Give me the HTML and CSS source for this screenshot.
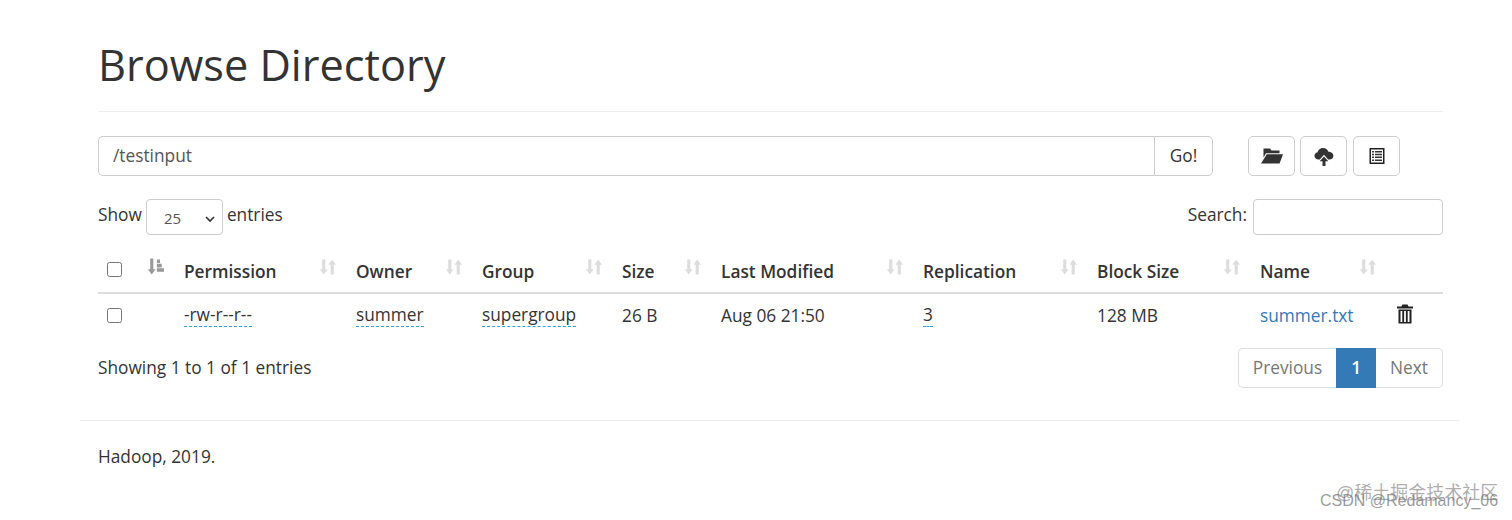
FILE: index.html
```html
<!DOCTYPE html>
<html lang="en">
<head>
    <meta charset="UTF-8">
    <title>Browsing HDFS</title>
    <link rel="stylesheet" href="styles.css">
</head>
<body>
    <div class="container">
        <div class="page-header">
            <h1>Browse Directory</h1>
        </div>

        <!-- Path bar and actions -->
        <div class="path-row">
            <div class="path-group">
                <input class="path-input" type="text" value="/testinput">
                <button class="go-btn">Go!</button>
            </div>
            <div class="actions">
                <button class="icon-btn" title="Create Directory">
                    <svg width="22" height="18" viewBox="0 0 22 18"><path fill="#333" d="M2.500 4V1.500h6.500l1.500 2H18.500v2.700H5L2.500 10.500z"/><path fill="#333" d="M5.800 7.200H22L18.600 16.500H0z"/></svg>
                </button>
                <button class="icon-btn" title="Upload Files">
                    <svg width="20" height="20" viewBox="0 0 20 20"><path fill="#333" d="M4.500 13.500C2 13.500 0.500 11.800 0.500 9.800c0-1.800 1.200-3.200 3-3.500C4.200 3.600 6.500 2 9 2c2.600 0 4.700 1.500 5.400 3.800 2.700 0 5 1.600 5 4 0 2.100-1.600 3.700-4 3.700h-1.300L10 8.800 5.800 13.500z"/><path fill="#333" d="M10 10.500l4.300 4.700h-2.800V20h-3v-4.800H5.700z"/></svg>
                </button>
                <button class="icon-btn icon-btn-last" title="Cut and Paste">
                    <svg width="18" height="18" viewBox="0 0 18 18"><path fill="#222" fill-rule="evenodd" d="M1.500 1h15v16h-15zM3 2.600v12.800h12V2.600z"/><path fill="#333" d="M4 4h2v1.500H4zM7 4h7v1.500H7zM4 6.800h2v1.500H4zM7 6.800h7v1.500H7zM4 9.600h2v1.500H4zM7 9.600h7v1.500H7zM4 12.400h2v1.500H4zM7 12.400h7v1.500H7z"/></svg>
                </button>
            </div>
        </div>

        <!-- Length and search -->
        <div class="filter-row">
            <label class="length-label">Show
                <span class="fake-select">25
                    <svg class="chevron" width="10" height="6" viewBox="0 0 10 6"><path fill="none" stroke="#333" stroke-width="1.700" d="M1 1l4 4 4-4"/></svg>
                </span>
                entries</label>
            <label class="search-label">Search: <input class="search-input" type="text"></label>
        </div>

        <table class="files">
            <colgroup>
                <col class="c-check"><col class="c-perm"><col class="c-owner"><col class="c-group"><col class="c-size">
                <col class="c-date"><col class="c-repl"><col class="c-block"><col class="c-name"><col class="c-del">
            </colgroup>
            <thead>
                <tr>
                    <th><input type="checkbox" class="check"><svg class="sort" viewBox="0 0 18 20"><use href="#arrow-down"/><path fill="#999" d="M10 2h3.500v4h-3.500zM10 7h5.500v4h-5.500zM10 12h8v4h-8z"/></svg></th>
                    <th>Permission<svg class="sort" viewBox="0 0 18 20"><use href="#sort-both"/></svg></th>
                    <th>Owner<svg class="sort" viewBox="0 0 18 20"><use href="#sort-both"/></svg></th>
                    <th>Group<svg class="sort" viewBox="0 0 18 20"><use href="#sort-both"/></svg></th>
                    <th>Size<svg class="sort" viewBox="0 0 18 20"><use href="#sort-both"/></svg></th>
                    <th>Last Modified<svg class="sort" viewBox="0 0 18 20"><use href="#sort-both"/></svg></th>
                    <th>Replication<svg class="sort" viewBox="0 0 18 20"><use href="#sort-both"/></svg></th>
                    <th>Block Size<svg class="sort" viewBox="0 0 18 20"><use href="#sort-both"/></svg></th>
                    <th>Name<svg class="sort" viewBox="0 0 18 20"><use href="#sort-both"/></svg></th>
                    <th></th>
                </tr>
            </thead>
            <tbody>
                <tr>
                    <td><input type="checkbox" class="check"></td>
                    <td><span class="explain">-rw-r--r--</span></td>
                    <td><span class="explain">summer</span></td>
                    <td><span class="explain">supergroup</span></td>
                    <td>26 B</td>
                    <td>Aug 06 21:50</td>
                    <td><span class="explain">3</span></td>
                    <td>128 MB</td>
                    <td><a class="file-link" href="#">summer.txt</a></td>
                    <td>
                        <svg class="trash" width="18" height="20" viewBox="0 0 18 20"><path fill="#222" fill-rule="evenodd" d="M6.500 0.500h5l1 2H17v2H1v-2h4.500zM2.500 5.500h13V19.500h-13zM4.500 7v11h1.800V7zM8.100 7v11h1.800V7zM11.700 7v11h1.800V7z"/></svg>
                    </td>
                </tr>
            </tbody>
        </table>

        <div class="table-foot">
            <div class="info">Showing 1 to 1 of 1 entries</div>
            <div class="pager">
                <a class="page-btn" href="#">Previous</a>
                <a class="page-btn current" href="#">1</a>
                <a class="page-btn" href="#">Next</a>
            </div>
        </div>

        <hr class="rule">
        <footer>Hadoop, 2019.</footer>
    </div>

    <div class="mark mark-top">@稀土掘金技术社区</div>
    <div class="mark mark-bottom">CSDN @Redamancy_06</div>

    <svg class="defs" width="0" height="0">
        <defs>
            <path id="arrow-down" fill="#999" d="M2.500 1h3.500v12h2.500l-4.300 6L0 13h2.500z"/>
            <g id="sort-both" fill="#ddd">
                <path d="M2.500 2h3.500v11h2.500l-4.300 6L0 13h2.500z"/>
                <path d="M12 19h3.500V8H18l-4.300-6L9.500 8H12z"/>
            </g>
        </defs>
    </svg>
</body>
</html>
```

FILE: styles.css
```css
body {
    font-family: "Open Sans", "Noto Sans", Arial, sans-serif;
    font-size: 17.300px;
    color: #333;
    background: #fff;
    margin: 0;
    padding: 0;
}
.container {
    width: 1345px;
    margin-left: 80px;
    padding: 0 17px 0 18px;
    box-sizing: content-box;
}
.page-header {
    margin: 0 0 24px;
    padding: 37px 0 18px;
    border-bottom: 1px solid #eee;
}
h1 {
    margin: 0;
    font-size: 43.300px;
    font-weight: 400;
    line-height: 56px;
}

/* path bar */
.path-row {
    display: flex;
    align-items: center;
}
.path-group {
    display: flex;
    width: 1115px;
    height: 40px;
}
.path-input {
    flex: 1;
    box-sizing: border-box;
    height: 40px;
    padding: 0 14px 2px;
    border: 1px solid #ccc;
    border-right: none;
    border-radius: 5px 0 0 5px;
    font: inherit;
    color: #555;
    outline: none;
}
.go-btn {
    width: 59px;
    height: 40px;
    padding: 0 0 2px;
    border: 1px solid #ccc;
    border-radius: 0 5px 5px 0;
    background: #fff;
    font: inherit;
    color: #333;
}
.actions {
    display: flex;
    gap: 5px;
    margin-left: 35px;
}
.icon-btn {
    display: flex;
    align-items: center;
    justify-content: center;
    width: 47px;
    height: 40px;
    padding: 0;
    border: 1px solid #ccc;
    border-radius: 5px;
    background: #fff;
}
.icon-btn-last {
    margin-left: 1px;
}

/* show entries / search */
.filter-row {
    display: flex;
    justify-content: space-between;
    align-items: center;
    margin-top: 23px;
}
.length-label {
    display: flex;
    align-items: flex-start;
    gap: 4px;
    line-height: 32px;
}
.fake-select {
    display: flex;
    align-items: center;
    justify-content: space-between;
    box-sizing: border-box;
    width: 77px;
    height: 36px;
    padding: 3px 7px 0 17px;
    border: 1px solid #ccc;
    border-radius: 4px;
    font-size: 15px;
    line-height: 1;
    color: #555;
}
.search-label {
    display: flex;
    align-items: flex-start;
    gap: 6px;
    line-height: 32px;
}
.search-input {
    box-sizing: border-box;
    width: 190px;
    height: 36px;
    border: 1px solid #ccc;
    border-radius: 4px;
}

/* table */
.files {
    width: 1345px;
    margin-top: 14px;
    border-collapse: collapse;
    table-layout: fixed;
}
.c-check { width: 76px; }
.c-perm { width: 172px; }
.c-owner { width: 126px; }
.c-group { width: 140px; }
.c-size { width: 99px; }
.c-date { width: 202px; }
.c-repl { width: 174px; }
.c-block { width: 163px; }
.c-name { width: 136px; }
.c-del { width: 57px; }
.files th {
    position: relative;
    height: 41px;
    padding: 2px 10px 0;
    text-align: left;
    font-weight: 600;
    color: #333;
    border-bottom: 2px solid #ddd;
}
.files td {
    height: 42px;
    padding: 0 10px 2px 10px;
}
.files th:first-child, .files td:first-child {
    padding-left: 9px;
}
.check {
    display: block;
    width: 15px;
    height: 15px;
    margin: 0;
}
.files th .check {
    margin-bottom: 5px;
}
.sort {
    position: absolute;
    right: 10px;
    top: 8px;
    width: 16px;
    height: 19px;
}
.explain {
    display: inline-block;
    line-height: 23px;
    border-bottom: 1px dashed #31a0d8;
}
.file-link {
    color: #337ab7;
    text-decoration: none;
}
.trash {
    display: block;
    margin-bottom: 3px;
}

/* info + pagination */
.table-foot {
    display: flex;
    justify-content: space-between;
    align-items: flex-start;
    margin-top: 10px;
}
.info {
    margin-top: 8px;
}
.pager {
    display: flex;
    height: 40px;
}
.page-btn {
    padding: 0 14px;
    line-height: 38px;
    border: 1px solid #ddd;
    color: #777;
    text-decoration: none;
}
.page-btn:first-child {
    border-radius: 5px 0 0 5px;
    border-right: none;
}
.page-btn:last-child {
    border-radius: 0 5px 5px 0;
    border-left: none;
}
.page-btn.current {
    background: #337ab7;
    border-color: #337ab7;
    color: #fff;
    font-weight: 600;
}
.rule {
    width: 1380px;
    margin: 32px 0 0 -18px;
    border: 0;
    border-top: 1px solid #eee;
}
footer {
    margin-top: 24px;
}

/* watermarks */
.mark {
    position: absolute;
    white-space: nowrap;
    font-family: "Liberation Sans", "Noto Sans CJK SC", sans-serif;
}
.mark-top {
    top: 478px;
    left: 1336px;
    font-size: 18px;
    color: rgba(120, 120, 120, 0.6);
}
.mark-bottom {
    top: 492px;
    left: 1320px;
    font-size: 16px;
    color: rgba(110, 110, 110, 0.7);
}
.defs {
    position: absolute;
}
```
